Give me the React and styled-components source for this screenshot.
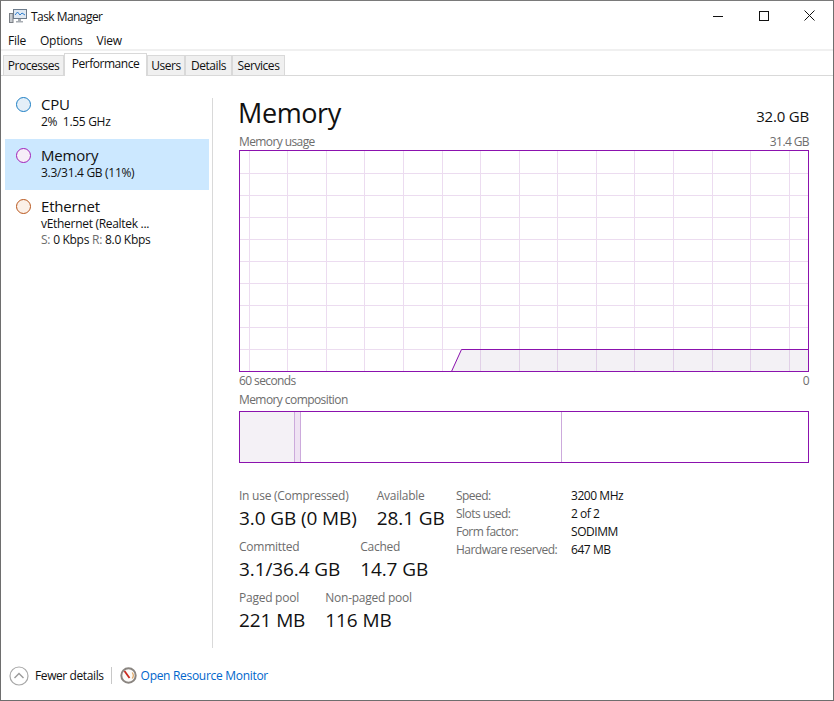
import styled, { createGlobalStyle } from "styled-components";

const GlobalStyle = createGlobalStyle`
  html, body {
    margin: 0;
    padding: 0;
    background: #fff;
  }
  * {
    box-sizing: border-box;
  }
`;

const PURPLE = "#8b12ae";
const GRID = "#ecdcf0";

const resources = [
  { name: "CPU", lines: [["2%  1.55 GHz"]], color: "#1c7ec4", fill: "#e4eff8" },
  { name: "Memory", lines: [["3.3/31.4 GB (11%)"]], color: "#a020b8", fill: "#f6eef8", active: true },
  { name: "Ethernet", lines: [["vEthernet (Realtek ..."], ["S:", "0 Kbps", "R:", "8.0 Kbps"]], color: "#b8561c", fill: "#fbf0e8" },
];

const tabs = [
  { label: "Processes", width: 61 },
  { label: "Performance", width: 83, active: true },
  { label: "Users", width: 38 },
  { label: "Details", width: 47 },
  { label: "Services", width: 53 },
];

const statRows = [
  [
    { label: "In use (Compressed)", value: "3.0 GB (0 MB)" },
    { label: "Available", value: "28.1 GB" },
  ],
  [
    { label: "Committed", value: "3.1/36.4 GB" },
    { label: "Cached", value: "14.7 GB" },
  ],
  [
    { label: "Paged pool", value: "221 MB" },
    { label: "Non-paged pool", value: "116 MB" },
  ],
];

const specs = [
  ["Speed:", "3200 MHz"],
  ["Slots used:", "2 of 2"],
  ["Form factor:", "SODIMM"],
  ["Hardware reserved:", "647 MB"],
];

const App = () => {
  const vLines = Array.from({ length: 15 }, (_, i) => Math.floor(10.2 + i * 38.57) + 0.5);
  const hLines = Array.from({ length: 9 }, (_, i) => 23.5 + i * 22);

  return (
    <Window>
      <GlobalStyle />
      <TitleBar>
        <AppIcon width="18" height="16" viewBox="0 0 18 16">
          <rect x="4.5" y="1.5" width="13" height="9" fill="#dfe8f2" stroke="#6d7c8c" />
          <path d="M6 7l2.5-3 2.5 3 2-2 3 2" fill="none" stroke="#2f7fd0" />
          <rect x="0.5" y="5.5" width="3.5" height="9" fill="#c8ccd0" stroke="#7a7f85" />
          <path d="M9 11h3v2h2v1.5H7V13h2z" fill="#a8adb3" />
        </AppIcon>
        <WindowTitle>Task Manager</WindowTitle>
        <Controls>
          <Control>
            <svg width="10" height="10" viewBox="0 0 10 10"><path d="M0 5.5h10" stroke="#111" /></svg>
          </Control>
          <Control>
            <svg width="10" height="10" viewBox="0 0 10 10"><rect x="0.5" y="0.5" width="9" height="9" fill="none" stroke="#111" /></svg>
          </Control>
          <Control>
            <svg width="11" height="11" viewBox="0 0 11 11"><path d="M0.5 0.5l10 10M10.5 0.5l-10 10" stroke="#111" /></svg>
          </Control>
        </Controls>
      </TitleBar>

      <MenuBar>
        <MenuItem>File</MenuItem>
        <MenuItem>Options</MenuItem>
        <MenuItem>View</MenuItem>
      </MenuBar>

      <TabStrip>
        {tabs.map((t) => (
          <Tab key={t.label} $active={t.active} $width={t.width}>{t.label}</Tab>
        ))}
      </TabStrip>

      <Body>
        <Sidebar>
          {resources.map((r) => (
            <Resource key={r.name} $active={r.active}>
              <Dot $color={r.color} $fill={r.fill} />
              <div>
                <ResourceName>{r.name}</ResourceName>
                {r.lines.map((parts, i) => (
                  <ResourceLine key={i}>
                    {parts.map((p) =>
                      p === "S:" || p === "R:" ? <Muted key={p}>{p}</Muted> : <span key={p}>{p}</span>
                    )}
                  </ResourceLine>
                ))}
              </div>
            </Resource>
          ))}
        </Sidebar>

        <Main>
          <Heading>
            <HeadingTitle>Memory</HeadingTitle>
            <HeadingSize>32.0 GB</HeadingSize>
          </Heading>

          <CaptionRow>
            <span>Memory usage</span>
            <span>31.4 GB</span>
          </CaptionRow>
          <Chart width="570" height="222" viewBox="0 0 570 222">
            {vLines.map((x) => (
              <line key={x} x1={x} x2={x} y1="0" y2="222" stroke={GRID} />
            ))}
            {hLines.map((y) => (
              <line key={y} x1="0" x2="570" y1={y} y2={y} stroke={GRID} />
            ))}
            <path d="M212 221.5L222 199.5H569.5V221.5Z" fill="#6b4a80" fillOpacity="0.08" stroke="none" />
            <path d="M212.5 221.5L222.5 199.5H569.5" fill="none" stroke={PURPLE} />
            <rect x="0.5" y="0.5" width="569" height="221" fill="none" stroke={PURPLE} />
          </Chart>
          <CaptionRow $tight>
            <span>60 seconds</span>
            <span>0</span>
          </CaptionRow>

          <CompositionCaption>Memory composition</CompositionCaption>
          <Composition>
            <Segment $width={55} $fill="#f4f1f6" />
            <Segment $width={6} $fill="#efe3f3" />
            <Segment $width={261} />
            <Segment $grow />
          </Composition>

          <Stats>
            <StatColumn>
              {statRows.map((row) => (
                <StatRow key={row[0].label}>
                  {row.map((s) => (
                    <Stat key={s.label}>
                      <StatLabel>{s.label}</StatLabel>
                      <StatValue>{s.value}</StatValue>
                    </Stat>
                  ))}
                </StatRow>
              ))}
            </StatColumn>
            <Specs>
              {specs.map(([k, v]) => (
                <SpecRow key={k}>
                  <SpecKey>{k}</SpecKey>
                  <SpecValue>{v}</SpecValue>
                </SpecRow>
              ))}
            </Specs>
          </Stats>
        </Main>
      </Body>

      <Footer>
        <svg width="20" height="20" viewBox="0 0 20 20">
          <circle cx="10" cy="10" r="9" fill="#fff" stroke="#a8a8a8" strokeWidth="1.2" />
          <path d="M5.5 12L10 7.5 14.5 12" fill="none" stroke="#9a9a9a" strokeWidth="1.4" />
        </svg>
        <FewerLabel>Fewer details</FewerLabel>
        <FooterDivider />
        <svg width="17" height="17" viewBox="0 0 17 17">
          <circle cx="8.5" cy="8.5" r="7.2" fill="#fbfaf8" stroke="#8a8580" strokeWidth="2" />
          <path d="M4.5 4l5 7" stroke="#c8281e" strokeWidth="1.8" />
          <path d="M12.2 5.5a5 5 0 0 1 0 6" fill="none" stroke="#e0a35c" strokeWidth="1.2" />
        </svg>
        <MonitorLink>Open Resource Monitor</MonitorLink>
      </Footer>
    </Window>
  );
};

export default App;

const Window = styled.div`
  display: flex;
  flex-direction: column;
  width: 834px;
  height: 701px;
  background: #fff;
  border: 1px solid #6e6e6e;
  border-top-color: #7a7a7a;
  font-family: "Open Sans", "Noto Sans", sans-serif;
  font-size: 12px;
  letter-spacing: -0.25px;
  color: #111;
  overflow: hidden;
`;

const TitleBar = styled.div`
  display: flex;
  align-items: center;
  height: 29px;
  padding-left: 8px;
`;

const AppIcon = styled.svg`
  margin-right: 4px;
`;

const WindowTitle = styled.span`
  flex: 1;
  padding-top: 1px;
  letter-spacing: -0.55px;
`;

const Controls = styled.div`
  display: flex;
  align-self: stretch;
  margin-right: 1px;
`;

const Control = styled.div`
  display: flex;
  align-items: center;
  justify-content: center;
  width: 45.5px;
`;

const MenuBar = styled.div`
  display: flex;
  align-items: center;
  gap: 14px;
  height: 19px;
  padding: 2px 0 0 7px;
`;

const MenuItem = styled.span``;

const TabStrip = styled.div`
  display: flex;
  align-items: flex-end;
  height: 27px;
  padding-left: 2px;
  border-top: 2px solid #f0f0f0;
  border-bottom: 1px solid #d9d9d9;
`;

const Tab = styled.div`
  display: flex;
  align-items: center;
  justify-content: center;
  width: ${(p) => p.$width}px;
  height: ${(p) => (p.$active ? "23px" : "20px")};
  padding-bottom: ${(p) => (p.$active ? "3px" : "0")};
  margin-bottom: ${(p) => (p.$active ? "-1px" : "0")};
  background: ${(p) => (p.$active ? "#fff" : "#f0f0f0")};
  border: 1px solid #d9d9d9;
  border-bottom: 0;
  letter-spacing: -0.45px;
`;

const Body = styled.div`
  display: flex;
  flex: 1;
  min-height: 0;
`;

const Sidebar = styled.div`
  width: 207px;
  margin: 12px 0 0 4px;
  padding-right: 3px;
`;

const Resource = styled.div`
  display: flex;
  gap: 10px;
  height: 51px;
  padding: 0 0 0 10px;
  background: ${(p) => (p.$active ? "#cce8ff" : "transparent")};
`;

const Dot = styled.span`
  flex: none;
  width: 15px;
  height: 15px;
  margin: 9px 0 0 1px;
  border-radius: 50%;
  border: 1.5px solid ${(p) => p.$color};
  background: ${(p) => p.$fill};
`;

const ResourceName = styled.div`
  font-size: 15px;
  line-height: 20px;
  margin-top: 6px;
  letter-spacing: -0.2px;
`;

const ResourceLine = styled.div`
  display: flex;
  gap: 3px;
  line-height: 16px;
  white-space: pre;
  letter-spacing: -0.3px;
`;

const Muted = styled.span`
  color: #6d6d6d;
`;

const Main = styled.div`
  flex: 1;
  min-width: 0;
  margin-top: 22px;
  margin-bottom: 3px;
  padding: 0 24px 0 26px;
  border-left: 1px solid #d9d9d9;
`;

const Heading = styled.div`
  display: flex;
  justify-content: space-between;
  align-items: flex-start;
  height: 34px;
`;

const HeadingTitle = styled.h1`
  margin: 0 0 0 -1px;
  font-size: 27px;
  font-weight: 400;
  line-height: 30px;
  letter-spacing: -0.4px;
`;

const HeadingSize = styled.span`
  margin-top: 8px;
  font-size: 15px;
  line-height: 20px;
  letter-spacing: -0.2px;
`;

const CaptionRow = styled.div`
  display: flex;
  justify-content: space-between;
  height: ${(p) => (p.$tight ? "18px" : "16px")};
  margin-top: ${(p) => (p.$tight ? "0" : "2px")};
  padding-top: ${(p) => (p.$tight ? "1px" : "0")};
  line-height: 16px;
  color: #6d6d6d;
  letter-spacing: -0.6px;
`;

const Chart = styled.svg`
  display: block;
`;

const CompositionCaption = styled.div`
  height: 21px;
  line-height: 20px;
  color: #6d6d6d;
  letter-spacing: -0.58px;
`;

const Composition = styled.div`
  display: flex;
  width: 570px;
  height: 52px;
  border: 1px solid ${PURPLE};
`;

const Segment = styled.div`
  flex: ${(p) => (p.$grow ? "1" : "none")};
  width: ${(p) => (p.$width ? `${p.$width}px` : "auto")};
  background: ${(p) => p.$fill || "#fff"};
  border-right: ${(p) => (p.$grow ? "0" : "1px solid #ccaadc")};
`;

const Stats = styled.div`
  display: flex;
  margin-top: 25px;
`;

const StatColumn = styled.div`
  display: flex;
  flex-direction: column;
  gap: 3px;
  width: 217px;
`;

const StatRow = styled.div`
  display: flex;
  gap: 20px;
  height: 48px;
`;

const Stat = styled.div`
  white-space: nowrap;
`;

const StatLabel = styled.div`
  line-height: 16px;
  color: #6d6d6d;
  letter-spacing: -0.25px;
`;

const StatValue = styled.div`
  font-size: 19px;
  line-height: 26px;
  margin-top: 1px;
  letter-spacing: -0.1px;
`;

const Specs = styled.div`
  display: flex;
  flex-direction: column;
`;

const SpecRow = styled.div`
  display: flex;
  height: 18px;
  line-height: 16px;
`;

const SpecKey = styled.span`
  width: 115px;
  color: #6d6d6d;
  letter-spacing: -0.53px;
`;

const SpecValue = styled.span`
  letter-spacing: -0.45px;
`;

const Footer = styled.div`
  display: flex;
  align-items: center;
  height: 49px;
  padding: 0 0 0 8px;
`;

const FewerLabel = styled.span`
  margin-left: 6px;
  letter-spacing: -0.4px;
`;

const FooterDivider = styled.span`
  width: 1px;
  height: 17px;
  margin: 0 8px 0 7px;
  background: #c8c8c8;
`;

const MonitorLink = styled.a`
  margin-left: 4px;
  color: #0066cc;
  letter-spacing: -0.3px;
`;
